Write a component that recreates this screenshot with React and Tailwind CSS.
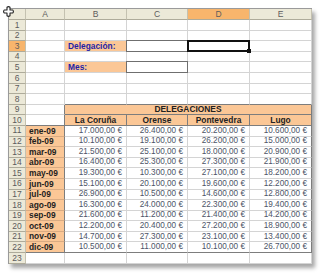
import React from "react";

const G = "border-r-[#d4d4d4]";
const GB = "border-b-[#d4d4d4]";
const D = "border-r-[#7d7d7d]";
const DB = "border-b-[#7d7d7d]";

function Cell({ className = "", r = G, b = GB, children }) {
  return (
    <div
      className={`relative flex items-center overflow-visible whitespace-nowrap border-r border-b ${r} ${b} ${className}`}
    >
      {children}
    </div>
  );
}

function HeadCell({ className = "", children }) {
  return (
    <div
      className={`flex items-center justify-center border-r border-b border-r-[#c4c1b0] border-b-[#aeab9a] text-[8.5px] text-[#5c5c5c] ${className}`}
    >
      {children}
    </div>
  );
}

const months = [
  "ene-09", "feb-09", "mar-09", "abr-09", "may-09", "jun-09",
  "jul-09", "ago-09", "sep-09", "oct-09", "nov-09", "dic-09",
];

const data = [
  ["17.000,00", "26.400,00", "20.200,00", "10.600,00"],
  ["10.100,00", "19.100,00", "26.200,00", "15.000,00"],
  ["21.500,00", "25.100,00", "18.000,00", "20.900,00"],
  ["16.400,00", "25.300,00", "27.300,00", "21.900,00"],
  ["19.300,00", "10.300,00", "27.100,00", "18.200,00"],
  ["15.100,00", "20.100,00", "19.600,00", "12.200,00"],
  ["26.900,00", "10.500,00", "14.600,00", "12.800,00"],
  ["16.300,00", "24.000,00", "22.300,00", "19.400,00"],
  ["21.600,00", "11.200,00", "21.400,00", "14.200,00"],
  ["12.200,00", "20.400,00", "27.200,00", "18.900,00"],
  ["14.700,00", "27.300,00", "23.100,00", "13.400,00"],
  ["10.500,00", "11.000,00", "10.100,00", "26.700,00"],
];

const cities = ["La Coruña", "Orense", "Pontevedra", "Lugo"];

function Row({ n }) {
  const rowHead = (
    <HeadCell className={n === 3 ? "bg-[#f8b56c]" : "bg-[#ece9d8]"}>{n}</HeadCell>
  );
  const cells = [];
  if (n === 3 || n === 5) {
    cells.push(<Cell key="a" />);
    cells.push(
      <Cell key="b" className="bg-[#fbc796] pl-[3px] text-[8.4px] font-bold text-[#1f1fa6]">
        {n === 3 ? "Delegación:" : "Mes:"}
      </Cell>
    );
    cells.push(
      <Cell key="c">
        <div className="pointer-events-none absolute -left-px -top-px bottom-[-1px] right-[-1px] border border-[#6f6f6f]" />
      </Cell>
    );
    cells.push(
      <Cell key="d">
        {n === 3 && (
          <div className="pointer-events-none absolute -left-[1px] -top-[1px] bottom-[-1px] right-[-1px] z-10 border-2 border-[#111]">
            <div className="absolute -bottom-[3px] -right-[3px] h-[4px] w-[4px] bg-[#111]" />
          </div>
        )}
      </Cell>
    );
    cells.push(<Cell key="e" />);
  } else if (n === 8) {
    cells.push(<Cell key="a" />);
    cells.push(<Cell key="b" b={DB} />);
    cells.push(<Cell key="c" b={DB} />);
    cells.push(<Cell key="d" b={DB} />);
    cells.push(<Cell key="e" b={DB} />);
  } else if (n === 9) {
    cells.push(<Cell key="a" r={D} />);
    cells.push(
      <Cell
        key="b"
        r={D}
        b={DB}
        className="col-span-4 justify-center bg-[#fbc796] text-[8.4px] font-bold text-[#222]"
      >
        DELEGACIONES
      </Cell>
    );
  } else if (n === 10) {
    cells.push(<Cell key="a" r={D} b={DB} />);
    cities.forEach((c) =>
      cells.push(
        <Cell
          key={c}
          r={D}
          b={DB}
          className="justify-center bg-[#fbc796] text-[8.4px] font-bold text-[#222]"
        >
          {c}
        </Cell>
      )
    );
  } else if (n >= 11 && n <= 22) {
    const i = n - 11;
    cells.push(
      <Cell
        key="a"
        r={D}
        b={n === 22 ? DB : "border-b-[#d9ab82]"}
        className="bg-[#fbc796] pl-[3px] text-[8.4px] font-bold text-[#1e1e1e]"
      >
        {months[i]}
      </Cell>
    );
    data[i].forEach((v, j) =>
      cells.push(
        <Cell
          key={j}
          r={j === 3 ? D : G}
          b={n === 22 ? DB : GB}
          className="justify-end pr-[4px] text-[8.2px] text-[#4d5467]"
        >
          {v} €
        </Cell>
      )
    );
  } else {
    ["a", "b", "c", "d", "e"].forEach((k) => cells.push(<Cell key={k} />));
  }
  return (
    <>
      {rowHead}
      {cells}
    </>
  );
}

export default function App() {
  const rows = [];
  for (let n = 1; n <= 23; n++) rows.push(<Row key={n} n={n} />);
  return (
    <div className="relative h-[274px] w-[320px] overflow-hidden bg-white pl-[8px] pt-[8px] font-['Liberation_Sans',Arial,sans-serif]">
      <div className="w-[304px] border-l border-t border-[#9a9a9a] bg-white shadow-[3px_4px_4px_rgba(0,0,0,0.35)]">
        <div className="grid grid-cols-[17px_39px_62px_61px_62px_62px] grid-rows-[11px_repeat(23,10.6px)] leading-none">
          <HeadCell className="bg-[#ece9d8]" />
          <HeadCell className="bg-[#ece9d8]">A</HeadCell>
          <HeadCell className="bg-[#ece9d8]">B</HeadCell>
          <HeadCell className="bg-[#ece9d8]">C</HeadCell>
          <HeadCell className="bg-[#f8b56c]">D</HeadCell>
          <HeadCell className="bg-[#ece9d8]">E</HeadCell>
          {rows}
        </div>
      </div>
      <svg
        className="absolute left-[3px] top-[6px]"
        width="11"
        height="11"
        viewBox="0 0 11 11"
      >
        <path
          d="M4 1.2 Q5.5 0 7 1.2 L7 4 L9.8 4 Q11 5.5 9.8 7 L7 7 L7 9.8 Q5.5 11 4 9.8 L4 7 L1.2 7 Q0 5.5 1.2 4 L4 4 Z"
          fill="#fff"
          stroke="#222"
          strokeWidth="1.1"
          strokeLinejoin="round"
        />
      </svg>
    </div>
  );
}
